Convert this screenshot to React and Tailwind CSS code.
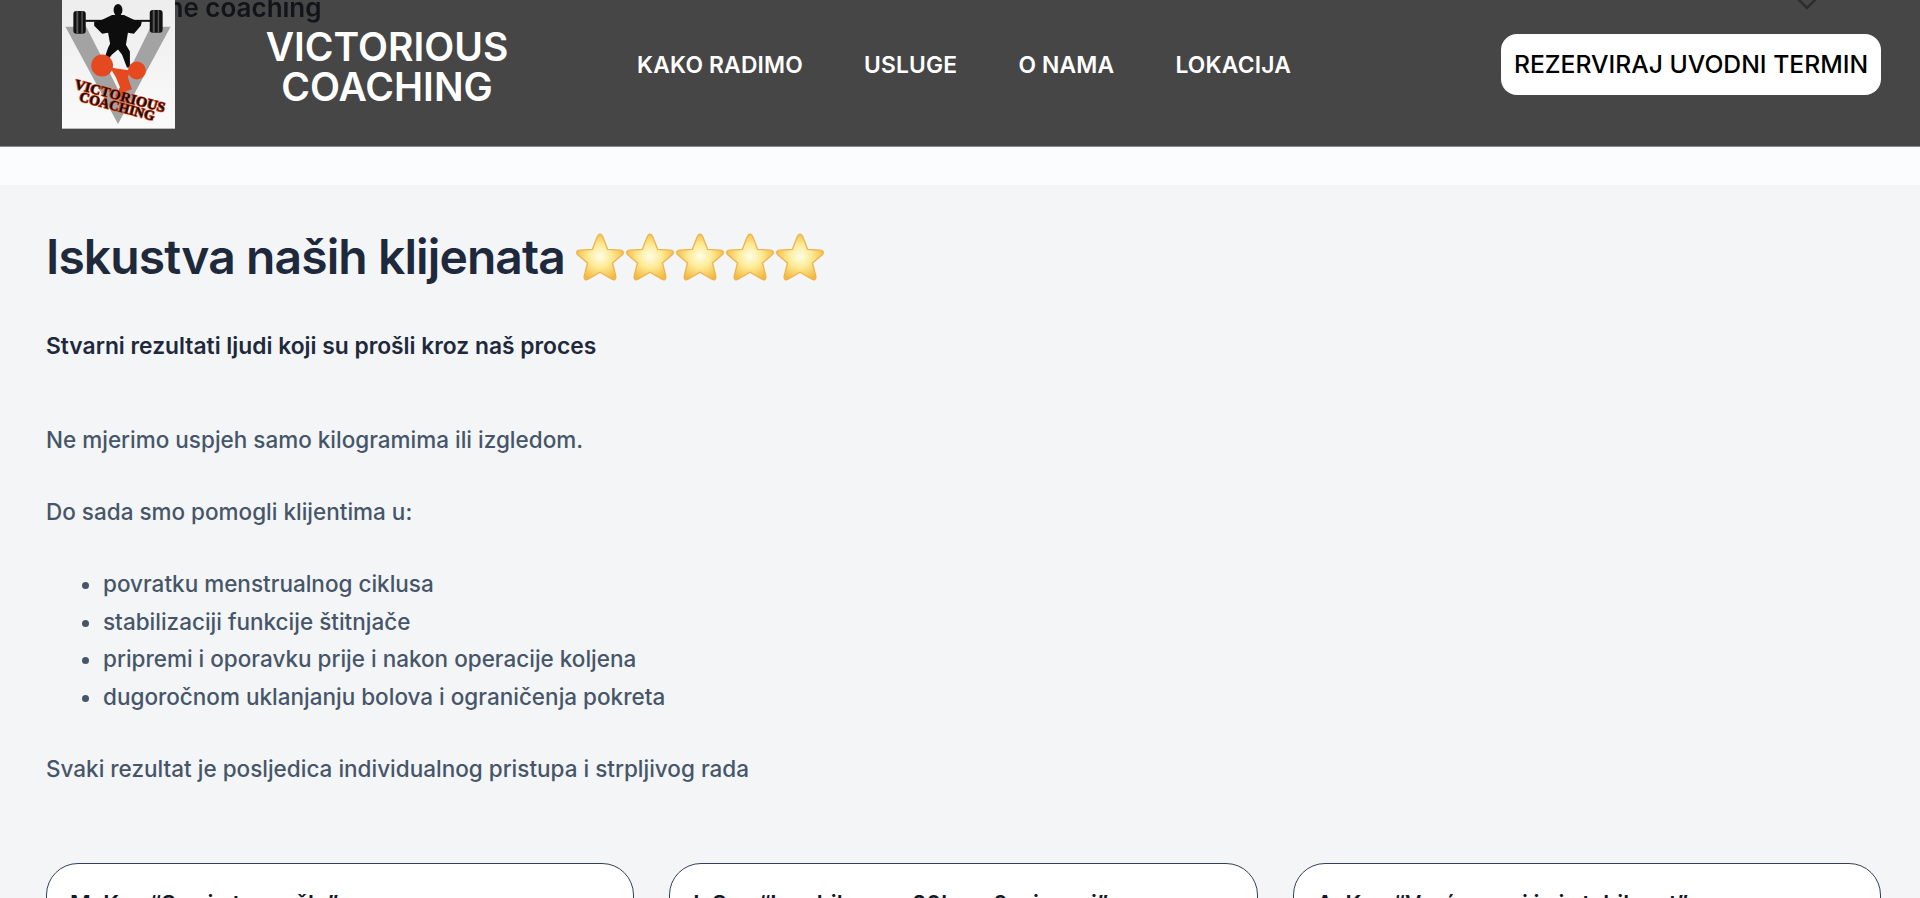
const font = { fontFamily: 'Inter, "Noto Sans", sans-serif' }

function Logo() {
  const lettering = { fontFamily: '"Liberation Serif", serif', paintOrder: 'stroke' }
  return (
    <div className="w-[113px] h-[129px] shrink-0 bg-gradient-to-b from-[#ededed] to-[#fafafa] border-b border-[#bbb] relative z-10 overflow-hidden">
      <svg viewBox="0 0 113 129" className="w-full h-full" xmlns="http://www.w3.org/2000/svg">
        <polygon points="3,27 24,27 57,92 89,27 109,27 56,125" fill="#a3a3a3" />
        <rect x="11" y="11" width="12.5" height="23" rx="3" fill="#111" />
        <rect x="14" y="11" width="2" height="23" fill="#555" />
        <rect x="19" y="11" width="1.5" height="23" fill="#555" />
        <rect x="88" y="10" width="13" height="23" rx="3" fill="#111" />
        <rect x="91" y="10" width="2" height="23" fill="#555" />
        <rect x="96" y="10" width="1.5" height="23" fill="#555" />
        <rect x="23" y="20" width="66" height="2" fill="#111" />
        <ellipse cx="56" cy="10" rx="4.5" ry="6" fill="#0d0d0d" />
        <path d="M50 15 L62 15 L72 20 L80 22 L79 26 L72 34 L66 33 L64 45 L68 52 L68 68 L65 68 L60 55 L56 50 L50 55 L46 60 L43 57 L46 48 L48 44 L46 33 L40 34 L32 26 L32 22 L40 20Z" fill="#0d0d0d" />
        <circle cx="40" cy="66" r="11" fill="#e4491f" />
        <circle cx="75" cy="71" r="9" fill="#e4491f" />
        <path d="M48 68 L68 71 L66 78 L70 90 L64 92 L60 98 L53 97 L58 88 L54 78Z" fill="#e4491f" />
        <g transform="rotate(15 56 104)">
          <text x="56" y="101" textAnchor="middle" fontSize="14" fontWeight="700" fill="#111" stroke="#e4491f" strokeWidth="1.4" style={lettering} textLength="94" lengthAdjust="spacingAndGlyphs">VICTORIOUS</text>
          <text x="56" y="112" textAnchor="middle" fontSize="14" fontWeight="700" fill="#111" stroke="#e4491f" strokeWidth="1.4" style={lettering} textLength="78" lengthAdjust="spacingAndGlyphs">COACHING</text>
        </g>
      </svg>
    </div>
  )
}

function Star() {
  return (
    <svg viewBox="2 2 46 45" className="w-[50px] h-[49px]" xmlns="http://www.w3.org/2000/svg">
      <defs>
        <radialGradient id="starFill" cx="50%" cy="48%" r="55%">
          <stop offset="0%" stopColor="#fffde8" />
          <stop offset="45%" stopColor="#fdeb96" />
          <stop offset="100%" stopColor="#f3b73e" />
        </radialGradient>
      </defs>
      <path
        d="M25 3 C26.5 3 27.2 4.5 28 6.5 L32 17 L43.5 17.8 C46.5 18 47.5 20 45.5 22 L36.5 29.5 L39.5 41.5 C40 44.5 38.5 46 36 44.5 L25 38 L14 44.5 C11.5 46 10 44.5 10.5 41.5 L13.5 29.5 L4.5 22 C2.5 20 3.5 18 6.5 17.8 L18 17 L22 6.5 C22.8 4.5 23.5 3 25 3Z"
        fill="url(#starFill)"
        stroke="#eeb450"
        strokeWidth="1.2"
      />
    </svg>
  )
}

const navLinks = ['KAKO RADIMO', 'USLUGE', 'O NAMA', 'LOKACIJA']
const listItems = [
  'povratku menstrualnog ciklusa',
  'stabilizaciji funkcije štitnjače',
  'pripremi i oporavku prije i nakon operacije koljena',
  'dugoročnom uklanjanju bolova i ograničenja pokreta',
]
const cards = ['M. Kos “Sve je to prošlo”', 'I. San “Izgubila sam 20kg u 6 mjeseci”', 'A. Kan “Vraćena mi je i stabilnost”']

export default function App() {
  return (
    <div className="h-[898px] overflow-hidden bg-[#f3f5f7]" style={font}>
      <header className="relative h-[147px] bg-[#464646] border-b border-[#8a8a8a] overflow-hidden">
        <span className="absolute left-[118px] -top-[12px] text-[26px] font-semibold text-[#111418] blur-[0.4px] whitespace-nowrap">
          Online coaching
        </span>
        <svg className="absolute left-[1795px] -top-[8px] w-[24px] h-[20px]" viewBox="0 0 24 20" fill="none" stroke="#2d2d2d" strokeWidth="2.5">
          <path d="M3 7l9 9 9-9" />
        </svg>
        <div className="flex items-start pl-[62px] pr-[39px]">
          <Logo />
          <div className="relative w-[300px] ml-[62px] mt-[27px] text-center text-white text-[39px] leading-[40px] font-semibold">
            VICTORIOUS<br />COACHING
          </div>
          <nav className="relative flex gap-[61px] ml-[100px] mt-[51px] text-white text-[22.8px] leading-[27px] font-semibold tracking-[0.2px]">
            {navLinks.map((link) => (
              <a key={link} href="#">{link}</a>
            ))}
          </nav>
          <button className="relative ml-auto mt-[34px] w-[380px] h-[61px] bg-white rounded-[16px] text-black text-[24.7px] font-medium">
            REZERVIRAJ UVODNI TERMIN
          </button>
        </div>
      </header>
      <div className="h-[38px] bg-[#fbfcfe]" />
      <section className="pl-[46px] pr-[39px] pt-[42px]">
        <h2 className="flex items-center text-[48px] leading-[60px] font-semibold tracking-[-0.9px] text-[#1e293b]">
          Iskustva naših klijenata
          <span className="flex ml-[10px]"><Star /><Star /><Star /><Star /><Star /></span>
        </h2>
        <p className="mt-[39.5px] text-[22.8px] leading-[37.5px] font-semibold text-[#1e293b]">
          Stvarni rezultati ljudi koji su prošli kroz naš proces
        </p>
        <div className="mt-[57px] text-[22.5px] leading-[37.5px] font-medium text-[#475569]">
          <p>Ne mjerimo uspjeh samo kilogramima ili izgledom.</p>
          <p className="mt-[34.5px]">Do sada smo pomogli klijentima u:</p>
          <ul className="mt-[34.5px] pl-[57px] list-disc">
            {listItems.map((item) => (
              <li key={item}>{item}</li>
            ))}
          </ul>
          <p className="mt-[34.5px]">Svaki rezultat je posljedica individualnog pristupa i strpljivog rada</p>
        </div>
        <div className="mt-[76px] grid grid-cols-3 gap-[35px]">
          {cards.map((title) => (
            <div key={title} className="h-[200px] bg-white border-[1.5px] border-[#334155] rounded-[32px] px-[23px] pt-[25px]">
              <h3 className="text-[22.5px] leading-[30px] font-semibold text-[#111827]">{title}</h3>
            </div>
          ))}
        </div>
      </section>
    </div>
  )
}
